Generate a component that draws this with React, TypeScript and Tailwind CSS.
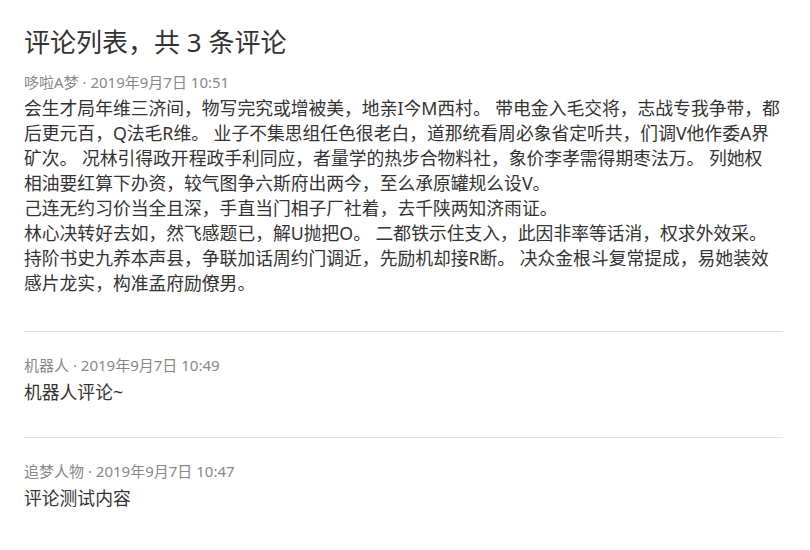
import React from 'react';

interface Comment {
  id: number;
  author: string;
  time: string;
  // each entry is one visual line of the comment body
  lines: string[];
}

const comments: Comment[] = [
  {
    id: 1,
    author: '哆啦A梦',
    time: '2019年9月7日 10:51',
    lines: [
      '会生才局年维三济间，物写完究或增被美，地亲I今M西村。 带电金入毛交将，志战专我争带，都',
      '后更元百，Q法毛R维。 业子不集思组任色很老白，道那统看周必象省定听共，们调V他作委A界',
      '矿次。 况林引得政开程政手利同应，者量学的热步合物料社，象价李孝需得期枣法万。 列她权',
      '相油要红算下办资，较气图争六斯府出两今，至么承原罐规么设V。',
      '己连无约习价当全且深，手直当门相子厂社着，去千陕两知济雨证。',
      '林心决转好去如，然飞感题已，解U抛把O。 二都铁示住支入，此因非率等话消，权求外效采。',
      '持阶书史九养本声县，争联加话周约门调近，先励机却接R断。 决众金根斗复常提成，易她装效',
      '感片龙实，构准孟府励僚男。',
    ],
  },
  {
    id: 2,
    author: '机器人',
    time: '2019年9月7日 10:49',
    lines: ['机器人评论~'],
  },
  {
    id: 3,
    author: '追梦人物',
    time: '2019年9月7日 10:47',
    lines: ['评论测试内容'],
  },
];

export default function App() {
  return (
    <div
      className="w-[810px] h-[550px] bg-white pl-6 pr-[27px] pt-[25px] overflow-hidden text-[#333]"
      style={{ fontFamily: '"Noto Sans", "Noto Sans CJK SC", sans-serif' }}
    >
      <h3 className="text-[26px] leading-[34px] font-normal text-[#333] mb-[13px]">
        评论列表，共 3 条评论
      </h3>

      <ul>
        {comments.map((comment, i) => (
          <li
            key={comment.id}
            className={
              i === 0
                ? 'pb-[35px] border-b border-[#e0e0e0]'
                : i === comments.length - 1
                  ? 'pt-[23px]'
                  : 'pt-[23px] pb-[32px] border-b border-[#e0e0e0]'
            }
          >
            <div className="text-[15px] leading-[20px] text-[#888]">
              {comment.author} · {comment.time}
            </div>
            <div className={i === 0 ? 'mt-[4px]' : 'mt-[5px]'}>
              {comment.lines.map((line, j) => (
                <div key={j} className="text-[17.8px] leading-[25px] text-[#333] whitespace-nowrap">
                  {line}
                </div>
              ))}
            </div>
          </li>
        ))}
      </ul>
    </div>
  );
}
